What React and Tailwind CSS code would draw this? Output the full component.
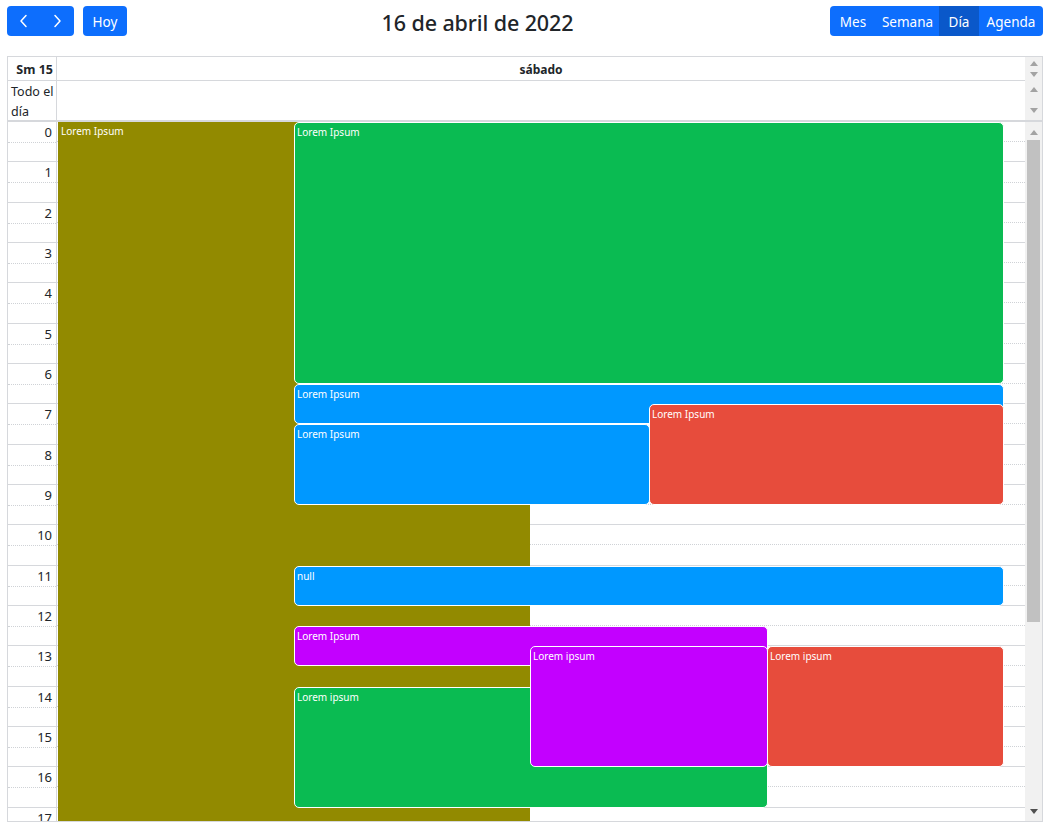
import React from 'react';

const HOUR = 40.33;
const hours = Array.from({ length: 18 }, (_, i) => i);

const events = [
    { title: 'Lorem Ipsum', start: 0, end: 24, left: 1, width: 472, color: '#928a00', plain: true },
    { title: 'Lorem Ipsum', start: 0, end: 6.5, left: 237, width: 710, color: '#0abb52' },
    { title: 'Lorem Ipsum', start: 6.5, end: 7.5, left: 237, width: 710, color: '#0098ff' },
    { title: 'Lorem Ipsum', start: 7.5, end: 9.5, left: 237, width: 356, color: '#0098ff' },
    { title: 'Lorem Ipsum', start: 7, end: 9.5, left: 592, width: 355, color: '#e74c3c' },
    { title: 'null', start: 11, end: 12, left: 237, width: 710, color: '#0098ff' },
    { title: 'Lorem Ipsum', start: 12.5, end: 13.5, left: 237, width: 474, color: '#c300ff' },
    { title: 'Lorem ipsum', start: 14, end: 17, left: 237, width: 474, color: '#0abb52' },
    { title: 'Lorem ipsum', start: 13, end: 16, left: 473, width: 238, color: '#c300ff' },
    { title: 'Lorem ipsum', start: 13, end: 16, left: 710, width: 237, color: '#e74c3c' },
];

function Arrow({ up, color = '#a3a3a3' }) {
    return (
        <svg width="8" height="5" viewBox="0 0 8 5">
            {up
                ? <polygon points="0,5 8,5 4,0" fill={color} />
                : <polygon points="0,0 8,0 4,5" fill={color} />}
        </svg>
    );
}

function Chevron({ left }) {
    return (
        <svg width="10" height="14" viewBox="0 0 10 14" fill="none" stroke="white" strokeWidth="1.5" strokeLinecap="round" strokeLinejoin="round">
            {left ? <polyline points="7,1.5 2,7 7,12.5" /> : <polyline points="3,1.5 8,7 3,12.5" />}
        </svg>
    );
}

export default function App() {
    return (
        <div className="w-full h-[832px] bg-white text-[#212529] pl-[7px] pr-[10px] pt-[6px] overflow-hidden" style={{ fontFamily: '"Noto Sans", "Open Sans", sans-serif' }}>
            {/* Toolbar */}
            <div className="flex items-center h-[30px] mb-[20px]">
                <div className="flex gap-[9px] w-[230px]">
                    <div className="flex rounded-[4px] overflow-hidden bg-[#0d6efd]">
                        <button className="w-[33px] h-[30px] flex items-center justify-center"><Chevron left /></button>
                        <button className="w-[34px] h-[30px] flex items-center justify-center"><Chevron /></button>
                    </div>
                    <button className="w-[44px] h-[30px] pt-[2px] rounded-[4px] bg-[#0d6efd] text-white text-[13.5px]">Hoy</button>
                </div>
                <div className="flex-1 text-center text-[21.5px] font-medium leading-none tracking-[-0.1px] pr-[112px] pt-[3px]">16 de abril de 2022</div>
                <div className="flex rounded-[4px] overflow-hidden bg-[#0d6efd] text-white text-[13.5px]">
                    <button className="w-[46px] h-[30px] pt-[2px]">Mes</button>
                    <button className="w-[63px] h-[30px] pt-[2px]">Semana</button>
                    <button className="w-[40px] h-[30px] pt-[2px] bg-[#0a58ca]">Día</button>
                    <button className="w-[64px] h-[30px] pt-[2px]">Agenda</button>
                </div>
            </div>

            {/* Calendar */}
            <div className="border border-[#d6d8dc] flex flex-col">
                <div className="flex">
                    <div className="flex-1 flex flex-col">
                        <div className="flex h-[24px] border-b border-[#d6d8dc]">
                            <div className="w-[49px] border-r border-[#d6d8dc] text-right pr-[3px] text-[12.5px] font-bold leading-[25px]">Sm 15</div>
                            <div className="flex-1 text-center text-[12px] font-bold leading-[25px]">sábado</div>
                        </div>
                        <div className="flex h-[39px]">
                            <div className="w-[49px] border-r border-[#d6d8dc] pl-[3px] text-[12.5px] leading-[20px] pt-[1px]">Todo el día</div>
                            <div className="flex-1" />
                        </div>
                    </div>
                    <div className="w-[17px] bg-[#f1f1f1] flex flex-col items-center">
                        <div className="h-[24px] flex flex-col justify-between items-center pt-[4px] pb-[4px]">
                            <Arrow up />
                            <Arrow />
                        </div>
                        <div className="h-[39px] flex flex-col justify-between items-center pt-[6px] pb-[7px]">
                            <Arrow up />
                            <Arrow />
                        </div>
                    </div>
                </div>

                <div className="flex h-[701px] border-t-2 border-[#d6d8dc] overflow-hidden">
                    {/* Gutter */}
                    <div className="w-[49px] border-r border-[#d6d8dc] flex flex-col">
                        {hours.map((h) => (
                            <div key={h} className="h-[40.33px] shrink-0 flex flex-col border-b border-[#d6d8dc]">
                                <div className="flex-1 border-b border-dotted border-[#cfd2d6] text-right pr-[4px] text-[13px] leading-[20px]">{h}</div>
                                <div className="flex-1" />
                            </div>
                        ))}
                    </div>

                    {/* Day column */}
                    <div className="flex-1 relative">
                        {hours.map((h) => (
                            <div key={h} className="h-[40.33px] flex flex-col border-b border-[#d6d8dc]">
                                <div className="flex-1 border-b border-dotted border-[#cfd2d6]" />
                                <div className="flex-1" />
                            </div>
                        ))}
                        {events.map((ev, i) => (
                            <div
                                key={i}
                                className={ev.plain
                                    ? 'absolute text-white text-[10px] leading-[13px] pt-[3px] pl-[3px]'
                                    : 'absolute text-white text-[10px] leading-[13px] pt-[3px] pl-[2px] border border-white rounded-[5px]'}
                                style={{
                                    top: ev.start * HOUR,
                                    height: (ev.end - ev.start) * HOUR,
                                    left: ev.left,
                                    width: ev.width,
                                    backgroundColor: ev.color,
                                }}
                            >
                                {ev.title}
                            </div>
                        ))}
                    </div>

                    {/* Scrollbar */}
                    <div className="w-[17px] bg-[#f1f1f1] flex flex-col items-center">
                        <div className="h-[18px] flex items-center justify-center pt-[2px]"><Arrow up /></div>
                        <div className="w-full px-[2px]">
                            <div className="h-[482px] bg-[#c1c1c1]" />
                        </div>
                        <div className="flex-1" />
                        <div className="h-[16px] flex items-center justify-center pb-[4px]"><Arrow color="#505050" /></div>
                    </div>
                </div>
            </div>
        </div>
    );
}
